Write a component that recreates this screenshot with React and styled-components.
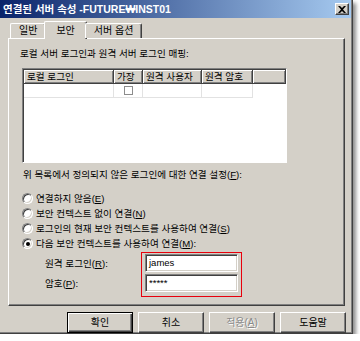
import styled, { createGlobalStyle } from "styled-components";

const GlobalStyle = createGlobalStyle`
  html, body { margin: 0; padding: 0; background: #fff; }
  body {
    font-family: "Liberation Sans", "Noto Sans CJK KR", sans-serif;
    font-size: 9.6px;
    line-height: 12px;
    color: #000;
  }
`;

const Page = styled.div`
  padding: 0;
`;

const Window = styled.section`
  box-sizing: border-box;
  width: 353px;
  height: 334px;
  background: #d4d0c8;
  border-right: 1px solid #404040;
  border-bottom: 1px solid #404040;
  box-shadow: inset -1px -1px #808080, 3px 3px 4px rgba(0, 0, 0, 0.45);
  display: flex;
  flex-direction: column;
`;

const TitleBar = styled.header`
  height: 18px;
  margin-right: 1px;
  padding: 0 2px 0 3px;
  display: flex;
  align-items: center;
  justify-content: space-between;
  background: linear-gradient(to right, #0a246a, #a6caf0);
`;

const Title = styled.h1`
  margin: 0;
  font-size: 10.5px;
  font-weight: bold;
  color: #fff;
`;

const CloseButton = styled.span`
  box-sizing: border-box;
  width: 14px;
  height: 12px;
  display: flex;
  align-items: center;
  justify-content: center;
  background: #d4d0c8;
  border: 1px solid;
  border-color: #fff #404040 #404040 #fff;
  box-shadow: inset -1px -1px #808080;
`;

const Body = styled.div`
  padding: 3px 7px 0 8px;
  display: flex;
  flex-direction: column;
`;

const TabRow = styled.div`
  display: flex;
  align-items: flex-end;
  height: 17px;
  padding-left: 2px;
  position: relative;
  z-index: 1;
`;

const Tab = styled.div`
  box-sizing: border-box;
  height: ${(p) => (p.$active ? "18px" : "15px")};
  margin: ${(p) => (p.$active ? "0 -2px -1px -2px" : "0")};
  padding: 0 ${(p) => (p.$active ? "11px" : "8px")};
  display: flex;
  align-items: center;
  font-size: 10px;
  background: #d4d0c8;
  border-top: 1px solid #fff;
  border-left: 1px solid #fff;
  border-right: 1px solid #404040;
  border-radius: 2px 2px 0 0;
  box-shadow: inset -1px 0 #808080;
`;

const Panel = styled.div`
  box-sizing: border-box;
  width: 337px;
  height: 268px;
  padding: 9px 0 0 11px;
  border: 1px solid;
  border-color: #fff #404040 #404040 #fff;
  box-shadow: inset -1px -1px #808080;
  display: flex;
  flex-direction: column;
  align-items: flex-start;
`;

const Caption = styled.div`
  margin-left: ${(p) => p.$indent || 0}px;
  margin-top: ${(p) => p.$top || 0}px;
`;

const U = styled.span`
  text-decoration: underline;
`;

const ListView = styled.div`
  box-sizing: border-box;
  width: 265px;
  height: 95px;
  margin: 8px 0 0 2px;
  background: #fff;
  border: 1px solid;
  border-color: #808080 #fff #fff #808080;
  box-shadow: inset 1px 1px #404040;
  padding: 1px 0 0 1px;
`;

const HeaderRow = styled.div`
  display: flex;
  height: 14px;
`;

const HeaderCell = styled.div`
  box-sizing: border-box;
  width: ${(p) => (p.$w ? `${p.$w}px` : "auto")};
  flex: ${(p) => (p.$w ? "none" : "1")};
  padding-left: 3px;
  background: #d4d0c8;
  border-right: 1px solid #404040;
  border-bottom: 1px solid #404040;
  box-shadow: inset 1px 1px #fff, inset -1px -1px #808080;
  line-height: 13px;
  white-space: nowrap;
  overflow: hidden;
`;

const DataRow = styled.div`
  display: flex;
  height: 14px;
`;

const DataCell = styled.div`
  box-sizing: border-box;
  width: ${(p) => p.$w}px;
  border-right: 1px solid #e2e2e2;
  border-bottom: 1px solid #e2e2e2;
  display: flex;
  align-items: center;
  justify-content: center;
`;

const CheckBox = styled.span`
  box-sizing: border-box;
  width: 9px;
  height: 9px;
  border: 1px solid #8c8c8c;
  background: #fff;
`;

const RadioList = styled.div`
  margin: 10px 0 0 2px;
  display: flex;
  flex-direction: column;
`;

const RadioRow = styled.label`
  height: 15px;
  display: flex;
  align-items: center;
  gap: 3px;
  white-space: nowrap;
`;

const Radio = styled.span`
  box-sizing: border-box;
  width: 11px;
  height: 11px;
  border-radius: 50%;
  border: 1px solid;
  border-color: #808080 #fff #fff #808080;
  box-shadow: inset 1px 1px #404040, inset -1px -1px #d4d0c8;
  background: #fff;
  display: flex;
  align-items: center;
  justify-content: center;

  &::after {
    content: "";
    width: 4px;
    height: 4px;
    border-radius: 50%;
    background: ${(p) => (p.$checked ? "#000" : "transparent")};
  }
`;

const LoginGrid = styled.div`
  margin: 1px 0 0 25px;
  display: flex;
`;

const Labels = styled.div`
  width: 96px;
  display: flex;
  flex-direction: column;
  gap: 8px;
  padding-top: 6px;
`;

const Highlight = styled.div`
  box-sizing: border-box;
  width: 101px;
  height: 45px;
  border: 1px solid #e8000c;
  padding: 1px 3px;
  display: flex;
  flex-direction: column;
  gap: 2px;
`;

const TextBox = styled.div`
  box-sizing: border-box;
  height: 18px;
  padding: 0 3px;
  background: #fff;
  border: 1px solid;
  border-color: #808080 #fff #fff #808080;
  box-shadow: inset 1px 1px #404040, inset -1px -1px #d4d0c8;
  display: flex;
  align-items: center;
  font-size: 9.5px;
`;

const ButtonRow = styled.div`
  margin-top: 6px;
  width: 338px;
  display: flex;
  justify-content: flex-end;
  gap: 5px;
`;

const Button = styled.button`
  box-sizing: border-box;
  width: 66px;
  height: 21px;
  padding: 0;
  font: inherit;
  font-size: 10px;
  background: #d4d0c8;
  color: ${(p) => (p.disabled ? "#8a8a8a" : "#000")};
  text-shadow: ${(p) => (p.disabled ? "1px 1px #fff" : "none")};
  border: 1px solid;
  border-color: ${(p) => (p.$default ? "#000" : "#fff #404040 #404040 #fff")};
  box-shadow: ${(p) =>
    p.$default
      ? "inset 1px 1px #fff, inset -1px -1px #404040, inset -2px -2px #808080"
      : "inset -1px -1px #808080"};
`;

const CloseIcon = () => (
  <svg width="8" height="7" viewBox="0 0 8 7">
    <path d="M0 0h2l2 2 2-2h2L5 3.5 8 7H6L4 5 2 7H0l3-3.5z" fill="#000" />
  </svg>
);

const columns = [90, 29, 59, 51];

const options = [
  { text: "연결하지 않음", key: "E", tail: "" },
  { text: "보안 컨텍스트 없이 연결", key: "N", tail: "" },
  { text: "로그인의 현재 보안 컨텍스트를 사용하여 연결", key: "S", tail: "" },
  { text: "다음 보안 컨텍스트를 사용하여 연결", key: "M", tail: ":", checked: true },
];

export default function App() {
  return (
    <Page>
      <GlobalStyle />
      <Window>
        <TitleBar>
          <Title>연결된 서버 속성 -FUTURE₩INST01</Title>
          <CloseButton>
            <CloseIcon />
          </CloseButton>
        </TitleBar>
        <Body>
          <TabRow>
            <Tab>일반</Tab>
            <Tab $active>보안</Tab>
            <Tab>서버 옵션</Tab>
          </TabRow>
          <Panel>
            <Caption>로컬 서버 로그인과 원격 서버 로그인 매핑:</Caption>
            <ListView>
              <HeaderRow>
                <HeaderCell $w={columns[0]}>로컬 로그인</HeaderCell>
                <HeaderCell $w={columns[1]}>가장</HeaderCell>
                <HeaderCell $w={columns[2]}>원격 사용자</HeaderCell>
                <HeaderCell $w={columns[3]}>원격 암호</HeaderCell>
                <HeaderCell />
              </HeaderRow>
              <DataRow>
                <DataCell $w={columns[0]} />
                <DataCell $w={columns[1]}>
                  <CheckBox />
                </DataCell>
                <DataCell $w={columns[2]} />
                <DataCell $w={columns[3]} />
              </DataRow>
            </ListView>
            <Caption $indent={3} $top={6}>
              위 목록에서 정의되지 않은 로그인에 대한 연결 설정(<U>F</U>):
            </Caption>
            <RadioList>
              {options.map((o) => (
                <RadioRow key={o.key}>
                  <Radio $checked={o.checked} />
                  <span>
                    {o.text}(<U>{o.key}</U>){o.tail}
                  </span>
                </RadioRow>
              ))}
            </RadioList>
            <LoginGrid>
              <Labels>
                <span>
                  원격 로그인(<U>R</U>):
                </span>
                <span>
                  암호(<U>P</U>):
                </span>
              </Labels>
              <Highlight>
                <TextBox>james</TextBox>
                <TextBox>*****</TextBox>
              </Highlight>
            </LoginGrid>
          </Panel>
          <ButtonRow>
            <Button $default>확인</Button>
            <Button>취소</Button>
            <Button disabled>
              적용(<U>A</U>)
            </Button>
            <Button>도움말</Button>
          </ButtonRow>
        </Body>
      </Window>
    </Page>
  );
}
